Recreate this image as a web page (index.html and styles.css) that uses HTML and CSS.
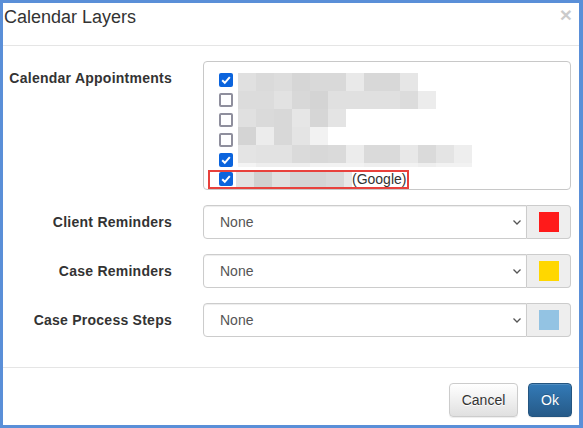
FILE: index.html
```html
<!DOCTYPE html>
<html>
<head>
<meta charset="utf-8">
<title>Calendar Layers</title>
<link rel="stylesheet" href="styles.css">
</head>
<body>
<div class="modal">
  <div class="modal-header">
    <h4 class="modal-title">Calendar Layers</h4>
    <span class="close">×</span>
  </div>
  <div class="modal-body">
    <div class="form-group">
      <label class="ctrl-label">Calendar Appointments</label>
      <div class="layer-list">
        <div class="list-top">
          <div class="checks">
            <span class="cb on"><svg viewBox="0 0 14 14" width="14" height="14"><polyline points="3.2,7.2 5.8,9.8 10.8,4.2" fill="none" stroke="#fff" stroke-width="2"/></svg></span>
            <span class="cb"></span>
            <span class="cb"></span>
            <span class="cb"></span>
            <span class="cb on"><svg viewBox="0 0 14 14" width="14" height="14"><polyline points="3.2,7.2 5.8,9.8 10.8,4.2" fill="none" stroke="#fff" stroke-width="2"/></svg></span>
          </div>
          <div class="mosaic">
            <div class="mrow"><span class="g-e0"></span><span class="g-da"></span><span class="g-dd"></span><span class="g-d6"></span><span class="g-d9"></span><span class="g-d9"></span><span class="g-e9"></span><span class="g-d8"></span><span class="g-d8"></span><span class="g-e6"></span></div>
            <div class="mrow"><span class="g-dc"></span><span class="g-dc"></span><span class="g-e2"></span><span class="g-d8"></span><span class="g-d4"></span><span class="g-e0"></span><span class="g-e0"></span><span class="g-e0"></span><span class="g-e0"></span><span class="g-dc"></span><span class="g-ec"></span></div>
            <div class="mrow"><span class="g-e0"></span><span class="g-da"></span><span class="g-d8"></span><span class="g-e6"></span><span class="g-d6"></span><span class="g-e4"></span></div>
            <div class="mrow"><span class="g-d4"></span><span class="g-ec"></span><span class="g-d8"></span><span class="g-e4"></span><span class="g-f2"></span></div>
            <div class="mrow"><span class="g-e4"></span><span class="g-e2"></span><span class="g-e2"></span><span class="g-da"></span><span class="g-d8"></span><span class="g-da"></span><span class="g-ec"></span><span class="g-da"></span><span class="g-da"></span><span class="g-e8"></span><span class="g-da"></span><span class="g-e4"></span><span class="g-ee"></span></div>
            <div class="mrow strip"><span class="g-f4"></span><span class="g-ee"></span><span class="g-ee"></span><span class="g-ee"></span><span class="g-f2"></span><span class="g-f2"></span><span class="g-f2"></span><span class="g-ee"></span><span class="g-ee"></span><span class="g-f2"></span><span class="g-ee"></span><span class="g-f2"></span><span class="g-f2"></span></div>
          </div>
        </div>
        <div class="google-row">
          <span class="cb on"><svg viewBox="0 0 14 14" width="14" height="14"><polyline points="3.2,7.2 5.8,9.8 10.8,4.2" fill="none" stroke="#fff" stroke-width="2"/></svg></span>
          <div class="cells"><span class="g-e2"></span><span class="g-d0"></span><span class="g-e0"></span><span class="g-d4"></span><span class="g-d4"></span><span class="g-d8"></span><span class="g-e8 part"></span></div>
          <span class="gtext">(Google)</span>
        </div>
      </div>
    </div>

    <div class="form-group">
      <label class="ctrl-label">Client Reminders</label>
      <div class="input-group">
        <div class="select"><span class="sel-text">None</span><svg class="chev" viewBox="0 0 8 5" width="8" height="5"><polyline points="0.5,0.5 4,4 7.5,0.5" fill="none" stroke="#555" stroke-width="1.3"/></svg></div>
        <span class="addon"><span class="swatch sw-red"></span></span>
      </div>
    </div>

    <div class="form-group">
      <label class="ctrl-label">Case Reminders</label>
      <div class="input-group">
        <div class="select"><span class="sel-text">None</span><svg class="chev" viewBox="0 0 8 5" width="8" height="5"><polyline points="0.5,0.5 4,4 7.5,0.5" fill="none" stroke="#555" stroke-width="1.3"/></svg></div>
        <span class="addon"><span class="swatch sw-yellow"></span></span>
      </div>
    </div>

    <div class="form-group">
      <label class="ctrl-label">Case Process Steps</label>
      <div class="input-group">
        <div class="select"><span class="sel-text">None</span><svg class="chev" viewBox="0 0 8 5" width="8" height="5"><polyline points="0.5,0.5 4,4 7.5,0.5" fill="none" stroke="#555" stroke-width="1.3"/></svg></div>
        <span class="addon"><span class="swatch sw-blue"></span></span>
      </div>
    </div>
  </div>
  <div class="modal-footer">
    <button class="btn btn-default">Cancel</button>
    <button class="btn btn-primary">Ok</button>
  </div>
</div>
</body>
</html>
```

FILE: styles.css
```css
html, body {
  margin: 0;
  padding: 0;
  height: 428px;
  overflow: hidden;
  background: #5a8fd8;
}

body {
  font-family: "Liberation Sans", Arial, sans-serif;
  font-size: 14px;
  color: #333;
}

.modal {
  box-sizing: border-box;
  height: 428px;
  border-style: solid;
  border-color: #5a8fd8;
  border-width: 3px 4px 3px 3px;
  background: #fff;
  display: flex;
  flex-direction: column;
}

.modal-header {
  box-sizing: border-box;
  height: 43px;
  border-bottom: 1px solid #e5e5e5;
  padding: 4px 7px 0 1px;
  display: flex;
  justify-content: space-between;
  align-items: flex-start;
}

.modal-title {
  margin: 0;
  font-size: 18px;
  line-height: 20px;
  font-weight: normal;
  color: #333;
}

.close {
  font-size: 21px;
  font-weight: bold;
  line-height: 1;
  color: #000;
  opacity: 0.2;
  margin-top: -3px;
}

.modal-body {
  padding: 15px 8px 0 0;
  flex: 1;
}

.form-group {
  display: flex;
  align-items: flex-start;
  margin-bottom: 15px;
}

.ctrl-label {
  width: 169px;
  flex: none;
  margin-right: 31px;
  padding-top: 7px;
  line-height: 20px;
  font-weight: bold;
  text-align: right;
  letter-spacing: 0.25px;
  color: #333;
}

/* Calendar list */
.layer-list {
  box-sizing: border-box;
  flex: 1;
  height: 129px;
  border: 1px solid #c8c8c8;
  border-radius: 4px;
  padding: 11px 0 0 4px;
}

.list-top {
  display: flex;
  margin-left: 11px;
}

.checks {
  display: flex;
  flex-direction: column;
  gap: 6px;
}

.cb {
  box-sizing: border-box;
  display: block;
  width: 14px;
  height: 14px;
  border: 2px solid #8f8f9d;
  border-radius: 2px;
  background: #fff;
  flex: none;
}

.cb.on {
  border: none;
  background: #0b64dd;
}

.cb svg {
  display: block;
}

.mosaic {
  margin-left: 5px;
  display: flex;
  flex-direction: column;
}

.mrow {
  display: flex;
  height: 18px;
}

.mrow span {
  width: 18px;
  height: 100%;
}

.mrow.strip {
  height: 4px;
}

.google-row {
  box-sizing: border-box;
  display: inline-flex;
  align-items: flex-start;
  margin-top: 3px;
  height: 19px;
  border: 2px solid #e8413c;
  padding: 0 1px 0 9px;
}

.cells {
  display: flex;
  margin-left: 3px;
  height: 15px;
}

.cells span {
  width: 18px;
  height: 100%;
}

.cells span.part {
  width: 8px;
}

.gtext {
  line-height: 15px;
  color: #333;
}

.g-d0 { background: #d0d0d0; }
.g-d4 { background: #d4d4d4; }
.g-d6 { background: #d6d6d6; }
.g-d8 { background: #d8d8d8; }
.g-d9 { background: #d9d9d9; }
.g-da { background: #dadada; }
.g-dc { background: #dcdcdc; }
.g-dd { background: #dddddd; }
.g-e0 { background: #e0e0e0; }
.g-e2 { background: #e2e2e2; }
.g-e4 { background: #e4e4e4; }
.g-e6 { background: #e6e6e6; }
.g-e8 { background: #e8e8e8; }
.g-e9 { background: #e9e9e9; }
.g-ec { background: #ececec; }
.g-ee { background: #eeeeee; }
.g-f2 { background: #f2f2f2; }
.g-f4 { background: #f4f4f4; }

/* Select rows */
.input-group {
  flex: 1;
  display: flex;
  height: 34px;
}

.select {
  box-sizing: border-box;
  flex: 1;
  height: 34px;
  border: 1px solid #ccc;
  border-radius: 4px 0 0 4px;
  box-shadow: inset 0 1px 1px rgba(0, 0, 0, 0.075);
  padding: 6px 5px 6px 16px;
  line-height: 20px;
  color: #555;
  display: flex;
  justify-content: space-between;
  align-items: center;
}

.chev {
  display: block;
}

.addon {
  box-sizing: border-box;
  width: 44px;
  height: 34px;
  background: #eee;
  border: 1px solid #ccc;
  border-left: none;
  border-radius: 0 4px 4px 0;
  padding: 6px 11px 0 12px;
}

.swatch {
  display: block;
  width: 20px;
  height: 20px;
}

.sw-red { background: #ff1a1a; }
.sw-yellow { background: #ffd700; }
.sw-blue { background: #93c3e3; }

/* Footer */
.modal-footer {
  box-sizing: border-box;
  height: 58px;
  border-top: 1px solid #e5e5e5;
  padding: 15px 7px 0 0;
  display: flex;
  justify-content: flex-end;
  align-items: flex-start;
  gap: 10px;
}

.btn {
  box-sizing: border-box;
  height: 34px;
  font-family: "Liberation Sans", Arial, sans-serif;
  font-size: 14px;
  line-height: 20px;
  padding: 6px 0;
  border-radius: 4px;
  border: 1px solid transparent;
  text-align: center;
}

.btn-default {
  width: 69px;
  color: #333;
  background: linear-gradient(to bottom, #fff 0, #e0e0e0 100%);
  border-color: #ccc;
  text-shadow: 0 1px 0 #fff;
  box-shadow: inset 0 1px 0 rgba(255, 255, 255, 0.15), 0 1px 1px rgba(0, 0, 0, 0.075);
}

.btn-primary {
  width: 44px;
  color: #fff;
  background: linear-gradient(to bottom, #337ab7 0, #265a88 100%);
  border-color: #245580;
  text-shadow: 0 -1px 0 rgba(0, 0, 0, 0.2);
  box-shadow: inset 0 1px 0 rgba(255, 255, 255, 0.15), 0 1px 1px rgba(0, 0, 0, 0.075);
}
```
